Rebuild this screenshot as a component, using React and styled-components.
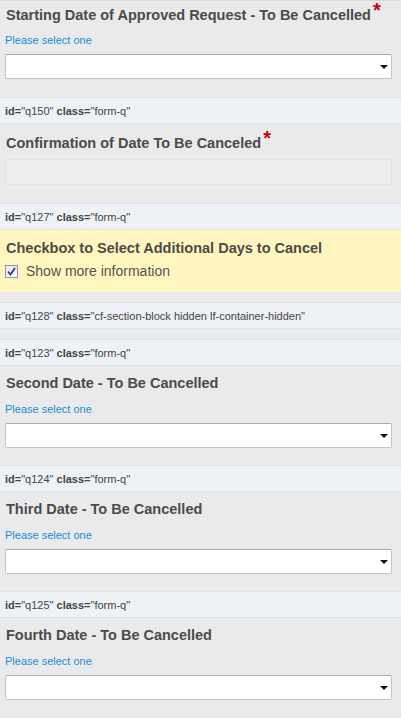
import React from 'react';
import styled, { createGlobalStyle } from 'styled-components';

const GlobalStyle = createGlobalStyle`
    html, body {
        margin: 0;
        padding: 0;
        background: #eaeaea;
    }
    body {
        font-family: "Liberation Sans", Arial, sans-serif;
        color: #505050;
    }
`;

const Page = styled.div`
    width: 401px;
    border-top: 1px solid #dcdcdc;
    box-sizing: border-box;
`;

const Question = styled.div`
    padding: ${p => p.$top || 8}px 9px ${p => p.$bottom || 17}px 5px;
    background: ${p => p.$highlight ? '#fff5bf' : 'transparent'};
`;

const Title = styled.div`
    font-size: 14.5px;
    font-weight: bold;
    line-height: 18px;
    color: #4b4b4b;
    padding-left: 1px;
    white-space: nowrap;
    margin-bottom: ${p => p.$gap || 10}px;
`;

const Required = styled.span`
    color: #c8000a;
    font-size: 20px;
    line-height: 0;
    vertical-align: 3px;
    margin-left: 2px;
`;

const Hint = styled.div`
    font-size: 11px;
    line-height: 14px;
    color: #1e8bd4;
    margin-bottom: 7px;
`;

const SelectBox = styled.div`
    height: 25px;
    box-sizing: border-box;
    background: #fff;
    border: 1px solid #c4c4c8;
    border-top-color: #a8a8ae;
    border-radius: 2px;
    display: flex;
    align-items: center;
    justify-content: flex-end;
    padding-right: 3px;
`;

const Arrow = styled.span`
    width: 0;
    height: 0;
    border-left: 4px solid transparent;
    border-right: 4px solid transparent;
    border-top: 4px solid #111;
    margin-top: 1px;
`;

const DisabledInput = styled.div`
    height: 26px;
    box-sizing: border-box;
    background: #eeeeee;
    border: 1px solid #e2e2e2;
    border-radius: 2px;
`;

const InfoBar = styled.div`
    height: 27px;
    box-sizing: border-box;
    background: #eef2f6;
    border-top: 1px solid #d8e3ee;
    border-bottom: 1px solid #d8e3ee;
    padding: 0 5px;
    display: flex;
    align-items: center;
    font-size: 11px;
    color: #444;
    white-space: nowrap;
`;

const Gap = styled.div`
    height: 10px;
`;

const CheckRow = styled.label`
    display: flex;
    align-items: center;
    gap: 8px;
    font-size: 14px;
    color: #555;
    line-height: 16px;
`;

const Check = styled.span`
    width: 13px;
    height: 13px;
    box-sizing: border-box;
    border: 1px solid #8f96a8;
    background: linear-gradient(#e8eaf0, #fbfbfc);
    display: flex;
    align-items: center;
    justify-content: center;
`;

const Bar = ({ id, cls }) => (
    <InfoBar>
        <b>id=</b>"{id}"&nbsp;<b>class=</b>"{cls}"
    </InfoBar>
);

const SelectQuestion = ({ title, required, top, gap, bottom }) => (
    <Question $top={top} $bottom={bottom}>
        <Title $gap={gap}>{title}{required && <Required>*</Required>}</Title>
        <Hint>Please select one</Hint>
        <SelectBox><Arrow /></SelectBox>
    </Question>
);

const App = () => {
    return (
        <Page>
            <GlobalStyle />
            <SelectQuestion title="Starting Date of Approved Request - To Be Cancelled" required top={5} gap={9} bottom={18} />
            <Bar id="q150" cls="form-q" />
            <Question $top={10} $bottom={18}>
                <Title $gap={7}>Confirmation of Date To Be Canceled<Required>*</Required></Title>
                <DisabledInput />
            </Question>
            <Bar id="q127" cls="form-q" />
            <Question $highlight $top={9} $bottom={13}>
                <Title $gap={6}>Checkbox to Select Additional Days to Cancel</Title>
                <CheckRow>
                    <Check>
                        <svg width="9" height="9" viewBox="0 0 9 9">
                            <path d="M1 4.5 L3.5 7.5 L8 1" fill="none" stroke="#2f3b8f" strokeWidth="1.8" />
                        </svg>
                    </Check>
                    Show more information
                </CheckRow>
            </Question>
            <Gap />
            <Bar id="q128" cls="cf-section-block hidden lf-container-hidden" />
            <Gap />
            <Bar id="q123" cls="form-q" />
            <SelectQuestion title="Second Date - To Be Cancelled" />
            <Bar id="q124" cls="form-q" />
            <SelectQuestion title="Third Date - To Be Cancelled" />
            <Bar id="q125" cls="form-q" />
            <SelectQuestion title="Fourth Date - To Be Cancelled" />
        </Page>
    );
};

export default App;
